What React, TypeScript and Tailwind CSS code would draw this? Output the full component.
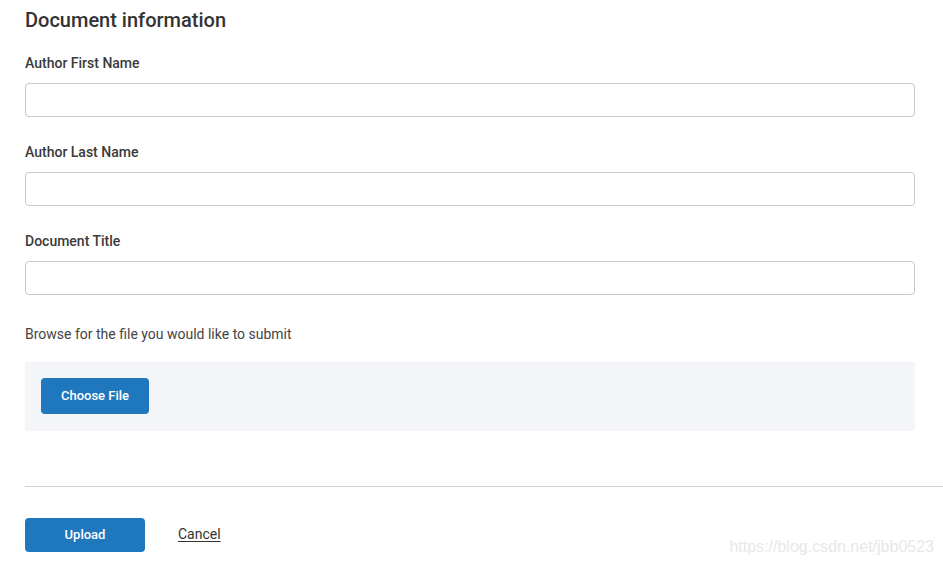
import React from 'react';

const fields = ['Author First Name', 'Author Last Name', 'Document Title'];

const App: React.FC = () => {
  return (
    <div className="relative w-[943px] h-[564px] bg-white overflow-hidden font-['Roboto',sans-serif] text-[#333]">
      <div className="pl-[25px] pr-[28px] pt-[6px]">
        <h1 className="text-[20px] leading-[28px] font-medium text-[#333]">Document information</h1>

        <div className="mt-[19px] flex flex-col gap-[25px]">
          {fields.map((f) => (
            <div key={f} className="flex flex-col gap-[10px]">
              <label className="text-[14px] leading-[20px] font-medium text-[#3a3a3a]">{f}</label>
              <input
                type="text"
                className="h-[34px] w-full rounded-[4px] border border-[#c9c9c9] bg-white px-3 outline-none"
              />
            </div>
          ))}
        </div>

        <p className="mt-[29px] text-[14px] leading-[20px] text-[#444]">Browse for the file you would like to submit</p>

        <div className="mt-[18px] h-[69px] rounded-[2px] bg-[#f4f5f9] px-[16px] pt-[16px]">
          <button className="h-[36px] w-[108px] rounded-[4px] bg-[#1f78bd] text-[13px] font-medium text-white">
            Choose File
          </button>
        </div>
      </div>

      <div className="ml-[25px] mt-[55px] h-px bg-[#cfcfcf]" />

      <div className="pl-[25px] mt-[31px] flex items-center gap-[33px]">
        <button className="h-[34px] w-[120px] rounded-[4px] bg-[#1f78bd] text-[13px] font-medium text-white">
          Upload
        </button>
        <a href="#" className="-mt-[2px] text-[14px] text-[#333] underline underline-offset-2">Cancel</a>
      </div>

      <span className="absolute right-[9px] bottom-[5px] font-['Liberation_Sans',sans-serif] text-[16px] text-[#e8e8e8]">
        https://blog.csdn.net/jbb0523
      </span>
    </div>
  );
};

export default App;
